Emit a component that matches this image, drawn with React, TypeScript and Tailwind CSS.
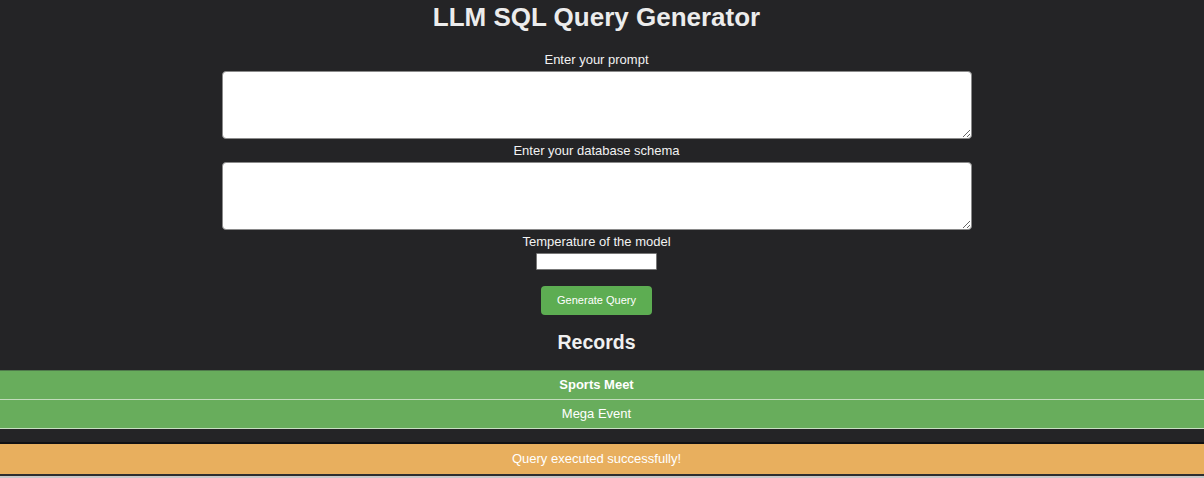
import React from "react";

export default function App() {
  return (
    <div
      className="w-[1204px] h-[478px] overflow-hidden bg-[#242426] text-[#f2f2f2]"
      style={{ fontFamily: '"Liberation Sans", Arial, sans-serif' }}
    >
      <div className="flex flex-col items-center pr-[11px]">
        <h1 className="mt-[2px] text-[26px] leading-[30px] font-bold text-[#ececec]">
          LLM SQL Query Generator
        </h1>
        <label className="mt-[20px] text-[13px] leading-[15px]">Enter your prompt</label>
        <textarea className="mt-[4px] w-[750px] h-[68px] bg-white rounded-[4px] border border-[#8a8a8a] resize-y" />
        <label className="mt-[4px] text-[13px] leading-[15px]">Enter your database schema</label>
        <textarea className="mt-[4px] w-[750px] h-[68px] bg-white rounded-[4px] border border-[#8a8a8a] resize-y" />
        <label className="mt-[4px] text-[13px] leading-[15px]">Temperature of the model</label>
        <input className="mt-[4px] w-[121px] h-[17px] bg-white border border-[#777] rounded-[1px]" />
        <button className="mt-[16px] w-[111px] h-[29px] rounded-[4px] bg-[#5dad52] text-white text-[11px] leading-[13px]">
          Generate Query
        </button>
        <h2 className="mt-[16px] text-[19.5px] leading-[22px] font-bold text-[#f0f0f0]">Records</h2>
      </div>
      <div className="mt-[17px] border-t border-[#4f7a4b]">
        <div className="h-[28px] bg-[#68ad5c] flex items-center justify-center pr-[11px] text-[13px] font-bold text-white">
          Sports Meet
        </div>
        <div className="h-[1px] bg-[#c2dcbc]" />
        <div className="h-[28px] bg-[#68ad5c] flex items-center justify-center pr-[11px] text-[13px] text-white">
          Mega Event
        </div>
        <div className="h-[1px] bg-[#c9dfc3]" />
      </div>
      <div className="h-[13px] bg-[#242426]" />
      <div className="h-[2px] bg-[#111113]" />
      <div className="h-[30px] bg-[#e8af5e] flex items-center justify-center pr-[11px] text-[13px] text-white">
        Query executed successfully!
      </div>
      <div className="h-[2px] bg-[#2e2e30]" />
      <div className="h-[5px] bg-[#c8c8ca]" />
    </div>
  );
}
